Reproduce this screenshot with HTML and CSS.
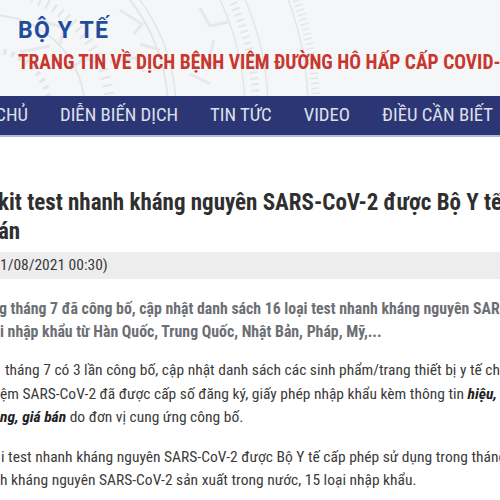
FILE: index.html
```html
<!DOCTYPE html>
<html lang="vi">
<head>
<meta charset="utf-8">
<title>Bộ Y tế - Trang tin về dịch bệnh COVID-19</title>
<link rel="stylesheet" href="styles.css">
</head>
<body>
<header class="site-header">
  <svg class="drum" width="500" height="96" viewBox="0 0 500 96" aria-hidden="true">
    <g fill="none" stroke="#e3e5e9">
      <circle cx="-10" cy="110" r="60" stroke-width="6" stroke-dasharray="3 5"/>
      <circle cx="-10" cy="110" r="95" stroke-width="2"/>
      <circle cx="-10" cy="110" r="120" stroke-width="10" stroke-dasharray="2 6"/>
      <circle cx="-10" cy="110" r="178" stroke-width="2"/>
      <circle cx="-10" cy="110" r="186" stroke-width="1.5"/>
      <circle cx="-10" cy="110" r="255" stroke-width="1.5"/>
      <circle cx="-10" cy="110" r="266" stroke-width="8" stroke-dasharray="2 4"/>
      <circle cx="-10" cy="110" r="278" stroke-width="1.5"/>
      <circle cx="-10" cy="110" r="318" stroke-width="1.5"/>
      <circle cx="-10" cy="110" r="326" stroke-width="8" stroke-dasharray="1.5 3.5"/>
    </g>
    <g fill="none" stroke="#e6e8ec" stroke-width="3">
      <path d="M120 10 l22 14 l-8 10 M140 44 l20 6 M110 62 l26 -4 l8 14"/>
      <path d="M200 8 l10 18 l18 -4 M214 40 l-6 22 l16 6 M190 74 l20 10"/>
      <path d="M40 20 l24 8 l-4 16 M20 52 l30 -6 M70 70 l14 -12 l18 6"/>
    </g>
  </svg>
  <div class="brand">BỘ Y TẾ</div>
  <div class="tagline">TRANG TIN VỀ DỊCH BỆNH VIÊM ĐƯỜNG HÔ HẤP CẤP COVID-19</div>
</header>

<nav class="main-nav">
  <ul class="nav-list">
    <li class="nav-item">TRANG CHỦ</li>
    <li class="nav-item">DIỄN BIẾN DỊCH</li>
    <li class="nav-item">TIN TỨC</li>
    <li class="nav-item">VIDEO</li>
    <li class="nav-item">ĐIỀU CẦN BIẾT</li>
  </ul>
</nav>

<main class="article">
  <h1 class="article-title">
    <span class="line t1">kit test nhanh kháng nguyên SARS-CoV-2 được Bộ Y tế cấp phép</span>
    <span class="line">án</span>
  </h1>
  <div class="article-date">1/08/2021 00:30)</div>

  <p class="lead">
    <span class="line">g tháng 7 đã công bố, cập nhật danh sách 16 loại test nhanh kháng nguyên SARS-CoV-2</span>
    <span class="line l2">i nhập khẩu từ Hàn Quốc, Trung Quốc, Nhật Bản, Pháp, Mỹ,...</span>
  </p>

  <p class="body-text">
    <span class="line p2a">tháng 7 có 3 lần công bố, cập nhật danh sách các sinh phẩm/trang thiết bị y tế chẩn đoán</span>
    <span class="line">ệm SARS-CoV-2 đã được cấp số đăng ký, giấy phép nhập khẩu kèm thông tin <b><i>hiệu, quy cách</i></b></span>
    <span class="line"><b><i>ng, giá bán</i></b> do đơn vị cung ứng công bố.</span>
  </p>

  <p class="body-text">
    <span class="line p3a">i test nhanh kháng nguyên SARS-CoV-2 được Bộ Y tế cấp phép sử dụng trong tháng 7</span>
    <span class="line">h kháng nguyên SARS-CoV-2 sản xuất trong nước, 15 loại nhập khẩu.</span>
  </p>
</main>
</body>
</html>
```
FILE: styles.css
```css
html, body {
  margin: 0;
  padding: 0;
  background: #fff;
}

body {
  width: 500px;
  height: 500px;
  overflow: hidden;
  font-family: Roboto, "Noto Sans", sans-serif;
  font-stretch: 75%;
  color: #333;
}

/* ---- header with faint drum emblem ---- */
.site-header {
  position: relative;
  height: 96px;
  box-sizing: border-box;
  padding: 18px 0 0 18px;
  background: #f5f6f8;
  overflow: hidden;
  white-space: nowrap;
}

.drum {
  position: absolute;
  left: 0;
  top: 0;
}

.brand {
  position: relative;
  font-size: 23px;
  line-height: 26px;
  font-weight: 700;
  font-stretch: 100%;
  letter-spacing: 1.2px;
  color: #1f4c9c;
}

.tagline {
  position: relative;
  margin-top: 8px;
  font-size: 19.5px;
  line-height: 22px;
  font-weight: 700;
  color: #c8362d;
}

/* ---- navigation bar ---- */
.main-nav {
  height: 39px;
  background: #2d3674;
  border-bottom: 2px solid #a9b9e2;
}

.nav-list {
  display: flex;
  margin: 0 0 0 -78px;
  padding: 0;
  list-style: none;
  white-space: nowrap;
}

.nav-item {
  padding: 0 16px;
  font-size: 18.7px;
  font-stretch: 80%;
  line-height: 39px;
  color: #dde0ec;
}

/* ---- article ---- */
.article {
  padding-top: 52px;
}

.line {
  display: block;
  white-space: nowrap;
}

.article-title {
  margin: 0 0 0 -2px;
  font-size: 23px;
  line-height: 28.5px;
  font-weight: 700;
  color: #2f2f2f;
}

.article-date {
  margin-top: 6px;
  height: 27px;
  font-size: 15.5px;
  line-height: 27px;
  background: #ededed;
  color: #3a3a3a;
  white-space: nowrap;
}

.lead {
  margin: 18px 0 0 -1px;
  font-size: 15.8px;
  line-height: 23px;
  font-weight: 700;
  color: #6c6f74;
}

.lead .l2 {
  margin-left: 1px;
}

.body-text {
  margin: 16px 0 0 0;
  font-size: 15.5px;
  line-height: 23.5px;
  color: #3b3b3b;
}

.body-text b {
  color: #222;
}

.p2a {
  padding-left: 5px;
}

.p3a {
  padding-left: 1px;
}
```
